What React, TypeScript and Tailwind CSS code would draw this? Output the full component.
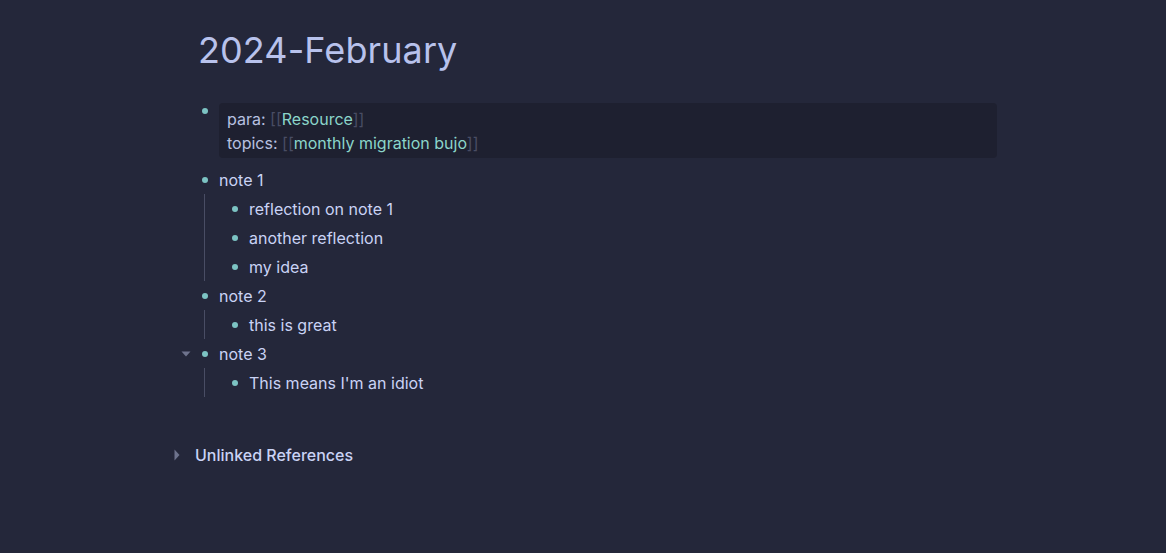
import React from 'react';

type Node = { text: string; children?: Node[]; collapsedArrow?: boolean };

const NOTES: Node[] = [
  { text: 'note 1', children: [{ text: 'reflection on note 1' }, { text: 'another reflection' }, { text: 'my idea' }] },
  { text: 'note 2', children: [{ text: 'this is great' }] },
  { text: 'note 3', collapsedArrow: true, children: [{ text: "This means I'm an idiot" }] },
];

function Bullet() {
  return (
    <div className="w-[14px] flex items-center justify-center shrink-0">
      <span className="block w-[6px] h-[6px] rounded-full bg-[#7cc3c3]" />
    </div>
  );
}

function PageRef({ label }: { label: string }) {
  return (
    <span>
      <span className="text-[#494d64]">[[</span>
      <span className="text-[#8bd5ca]">{label}</span>
      <span className="text-[#494d64]">]]</span>
    </span>
  );
}

function Block({ node, child }: { node: Node; child?: boolean }) {
  return (
    <div>
      <div className={`relative flex items-center ${child ? 'h-[29px]' : 'h-[28px]'}`}>
        {node.collapsedArrow && (
          <svg className="absolute left-[-17px] top-[11px]" width="10" height="6" viewBox="0 0 10 6">
            <path d="M0.5 0.5 L9.5 0.5 L5 5.5 Z" fill="#6e738d" />
          </svg>
        )}
        <Bullet />
        <span className="ml-[7px] text-[16px] text-[#cad3f5]">{node.text}</span>
      </div>
      {node.children && (
        <div className="ml-[6px] border-l border-[#494d64] pl-[23px]">
          {node.children.map((c) => (
            <Block key={c.text} node={c} child />
          ))}
        </div>
      )}
    </div>
  );
}

export default function App() {
  return (
    <div
      className="w-[1166px] h-[553px] bg-[#24273a] overflow-hidden"
      style={{ fontFamily: 'Inter, "Noto Sans", sans-serif' }}
    >
      <div className="ml-[198px] w-[799px] pt-[26px]">
        <h1 className="text-[36px] leading-[48px] font-normal text-[#b8c2ec] tracking-[0.1px]">2024-February</h1>

        {/* properties block */}
        <div className="flex items-start mt-[29px]">
          <div className="h-[16px] flex items-center">
            <Bullet />
          </div>
          <div className="ml-[7px] flex-1 bg-[#1e2030] rounded-[4px] pt-[4px] pb-[3px] px-[8px] text-[16px] leading-[24px]">
            <div>
              <span className="text-[#b8c0e0]">para: </span>
              <PageRef label="Resource" />
            </div>
            <div>
              <span className="text-[#b8c0e0]">topics: </span>
              <PageRef label="monthly migration bujo" />
            </div>
          </div>
        </div>

        <div className="mt-[8px] flex flex-col gap-[1px]">
          {NOTES.map((n) => (
            <Block key={n.text} node={n} />
          ))}
        </div>
      </div>

      {/* unlinked references */}
      <div className="ml-[174px] mt-[46px] flex items-center h-[24px]">
        <svg width="6" height="12" viewBox="0 0 6 12">
          <path d="M0.5 0.5 L5.5 6 L0.5 11.5 Z" fill="#6e738d" />
        </svg>
        <span className="ml-[15px] text-[16px] font-medium text-[#cad3f5]">Unlinked References</span>
      </div>
    </div>
  );
}
